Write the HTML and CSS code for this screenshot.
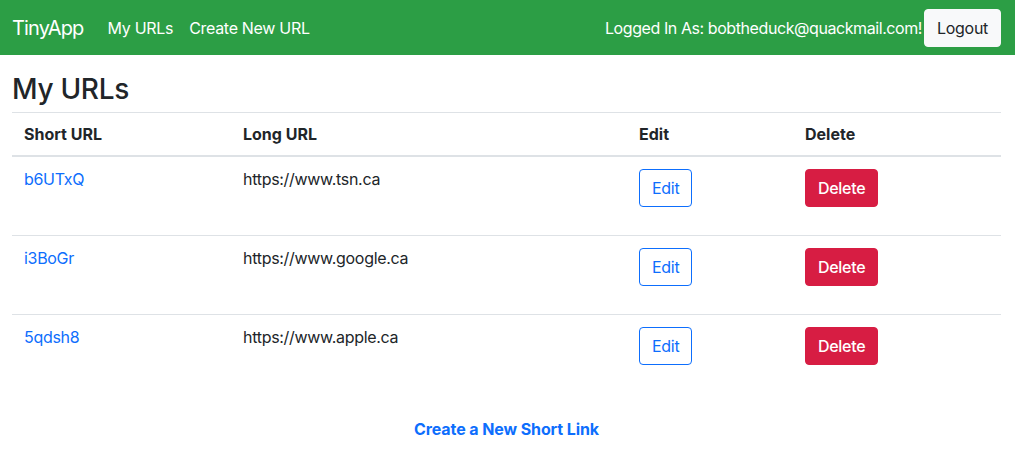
FILE: index.html
```html
<!DOCTYPE html>
<html lang="en">
<head>
<meta charset="utf-8">
<title>TinyApp</title>
<link rel="stylesheet" href="styles.css">
</head>
<body>
<nav class="navbar">
  <div class="nav-left">
    <a class="brand" href="#">TinyApp</a>
    <a class="nav-link" href="#">My URLs</a>
    <a class="nav-link" href="#">Create New URL</a>
  </div>
  <div class="nav-right">
    <span class="user">Logged In As: bobtheduck@quackmail.com!</span>
    <button class="btn btn-light">Logout</button>
  </div>
</nav>
<main class="container">
  <h1 class="title">My URLs</h1>
  <table class="table">
    <thead>
      <tr>
        <th class="c1">Short URL</th>
        <th class="c2">Long URL</th>
        <th class="c3">Edit</th>
        <th class="c4">Delete</th>
      </tr>
    </thead>
    <tbody>
      <tr>
        <td><a class="link" href="#">b6UTxQ</a></td>
        <td>https://www.tsn.ca</td>
        <td><button class="btn btn-outline">Edit</button></td>
        <td><button class="btn btn-danger">Delete</button></td>
      </tr>
      <tr>
        <td><a class="link" href="#">i3BoGr</a></td>
        <td>https://www.google.ca</td>
        <td><button class="btn btn-outline">Edit</button></td>
        <td><button class="btn btn-danger">Delete</button></td>
      </tr>
      <tr>
        <td><a class="link" href="#">5qdsh8</a></td>
        <td>https://www.apple.ca</td>
        <td><button class="btn btn-outline">Edit</button></td>
        <td><button class="btn btn-danger">Delete</button></td>
      </tr>
    </tbody>
  </table>
  <div class="create">
    <a class="create-link" href="#">Create a New Short Link</a>
  </div>
</main>
</body>
</html>
```

FILE: styles.css
```css
* { box-sizing: border-box; }
html, body { margin: 0; padding: 0; }
body {
  font-family: Inter, "Liberation Sans", Arial, sans-serif;
  font-size: 16px;
  line-height: 24px;
  color: #212529;
  background: #fff;
}
a { text-decoration: none; }
.navbar {
  height: 55px;
  background: #2c9e45;
  display: flex;
  align-items: center;
  justify-content: space-between;
  padding: 0 14px 0 12px;
}
.nav-left { display: flex; align-items: center; }
.brand {
  color: #fff;
  font-size: 20px;
  margin-right: 24px;
  letter-spacing: -0.85px;
}
.nav-link {
  color: #fff;
  margin-right: 16px;
  letter-spacing: -0.3px;
}
.nav-right { display: flex; align-items: center; }
.user { color: #fff; letter-spacing: -0.42px; }
.btn {
  font-family: inherit;
  font-size: 16px;
  line-height: 24px;
  height: 38px;
  padding: 6px 12px;
  border-radius: 4px;
  border: 1px solid transparent;
  cursor: pointer;
  letter-spacing: -0.3px;
}
.btn-light {
  background: #f8f9fa;
  color: #212529;
  border-color: #f8f9fa;
  margin-left: 2px;
}
.btn-outline {
  background: #fff;
  color: #0d6efd;
  border-color: #0d6efd;
}
.btn-danger {
  background: #d71d43;
  color: #fff;
  border-color: #d71d43;
  font-weight: 500;
}
.container { padding: 0 14px 0 12px; }
.title {
  font-size: 28px;
  font-weight: 500;
  line-height: 34px;
  margin: 17px 0 6px 0;
  letter-spacing: -0.3px;
}
.table {
  width: 100%;
  border-collapse: collapse;
}
.table th, .table td {
  text-align: left;
  vertical-align: top;
  padding: 10px 12px 0 12px;
  letter-spacing: -0.3px;
}
.table th {
  font-weight: 700;
  letter-spacing: 0;
  padding: 9px 12px 9px 12px;
  border-top: 1px solid #dee2e6;
  border-bottom: 2px solid #dee2e6;
}
.table td { height: 79px; }
.table td .btn { margin-top: 2px; }
.table tbody tr + tr td { border-top: 1px solid #dee2e6; }
.c1 { width: 219px; }
.c2 { width: 396px; }
.c3 { width: 166px; }
.link { color: #0d6efd; }
.create {
  text-align: center;
  margin-top: 24px;
}
.create-link {
  color: #0d6efd;
  font-weight: 700;
  letter-spacing: -0.1px;
}
```
